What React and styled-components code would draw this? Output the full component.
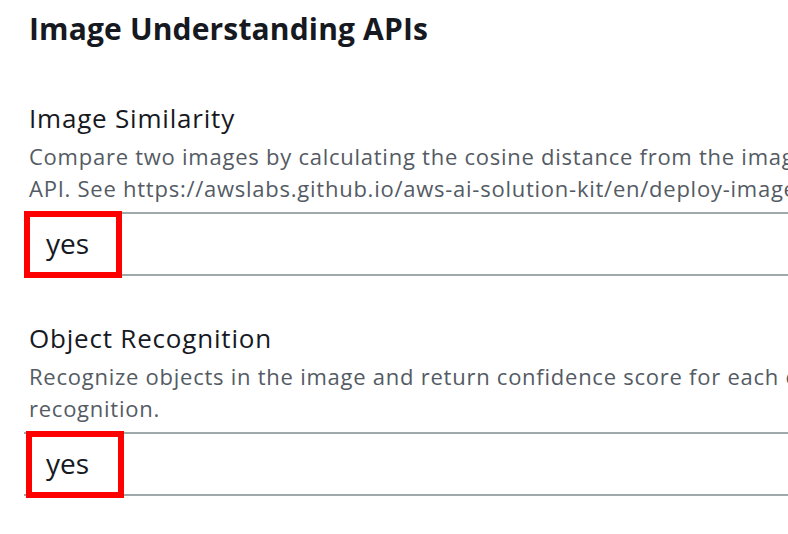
import React from "react";
import styled, { createGlobalStyle } from "styled-components";

const Global = createGlobalStyle`
  html, body {
    margin: 0;
    padding: 0;
    background: #ffffff;
    overflow: hidden;
  }
  body {
    font-family: "Open Sans", "Noto Sans", Arial, sans-serif;
    color: #16191f;
  }
`;

const Page = styled.div`
  width: 788px;
  height: 534px;
  overflow: hidden;
  padding-left: 29px;
  box-sizing: border-box;
  display: flex;
  flex-direction: column;
`;

const Title = styled.h2`
  margin: 11px 0 9px;
  font-size: 30px;
  line-height: 36px;
  font-weight: 700;
  letter-spacing: 0.15px;
  color: #16191f;
  white-space: nowrap;
`;

const Field = styled.section`
  margin-top: 47px;
  display: flex;
  flex-direction: column;
`;

const Label = styled.div`
  font-size: 26px;
  line-height: 30px;
  letter-spacing: 0.8px;
  color: #16191f;
  white-space: nowrap;
`;

const Description = styled.div`
  margin-top: 7px;
  font-size: 22px;
  line-height: 32px;
  letter-spacing: 0.75px;
  color: #545b64;
`;

const DescLine = styled.div`
  white-space: nowrap;
`;

const InputRow = styled.div`
  position: relative;
  margin: 8px 0 0 -5px;
  width: 900px;
  border-top: 2px solid #9fa9a9;
  border-bottom: 2px solid #9fa9a9;
  height: 60px;
  box-sizing: content-box;
`;

const Value = styled.div`
  padding-left: 22px;
  font-size: 28px;
  line-height: 58px;
  color: #16191f;
`;

const Highlight = styled.div`
  position: absolute;
  left: ${(p) => p.$dx}px;
  top: -3px;
  width: 98px;
  height: 67px;
  border: 6px solid #ff0000;
  box-sizing: border-box;
`;

const fields = [
  {
    label: "Image Similarity",
    lines: [
      "Compare two images by calculating the cosine distance from the image feature vectors. Depends on the Image Feature Vector",
      "API. See https://awslabs.github.io/aws-ai-solution-kit/en/deploy-image-similarity/ for more details.",
    ],
    dx: 0,
  },
  {
    label: "Object Recognition",
    lines: [
      "Recognize objects in the image and return confidence score for each object. See the documentation for object",
      "recognition.",
    ],
    dx: 2,
  },
];

export default function App() {
  return (
    <>
      <Global />
      <Page>
        <Title>Image Understanding APIs</Title>
        {fields.map((f) => (
          <Field key={f.label}>
            <Label>{f.label}</Label>
            <Description>
              {f.lines.map((l) => (
                <DescLine key={l}>{l}</DescLine>
              ))}
            </Description>
            <InputRow>
              <Value>yes</Value>
              <Highlight $dx={f.dx} />
            </InputRow>
          </Field>
        ))}
      </Page>
    </>
  );
}
